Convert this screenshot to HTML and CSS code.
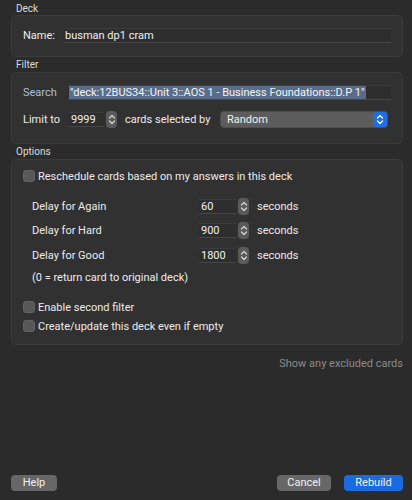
FILE: index.html
```html
<!DOCTYPE html>
<html>
<head>
<meta charset="utf-8">
<link rel="stylesheet" href="styles.css">
</head>
<body>
<div class="dialog">
  <div class="group-title t-deck">Deck</div>
  <div class="box box-deck">
    <div class="row">
      <span class="lbl lbl-name">Name:</span>
      <div class="field field-name">busman dp1 cram</div>
    </div>
  </div>

  <div class="group-title t-filter">Filter</div>
  <div class="box box-filter">
    <div class="row row-search">
      <span class="lbl lbl-search">Search</span>
      <div class="field field-search"><span class="sel">"deck:12BUS34::Unit 3::AOS 1 - Business Foundations::D.P 1"</span></div>
    </div>
    <div class="row row-limit">
      <span class="lbl lbl-limit">Limit to</span>
      <div class="field field-num field-limit">9999</div>
      <span class="stepper"><svg width="8" height="13" viewBox="0 0 8 13"><path d="M1.5 5 L4 2.5 L6.5 5 M1.5 8 L4 10.5 L6.5 8" fill="none" stroke="#d8d8d8" stroke-width="1.2" stroke-linecap="round" stroke-linejoin="round"/></svg></span>
      <span class="lbl lbl-cards">cards selected by</span>
      <div class="select">
        <span class="select-text">Random</span>
        <span class="select-btn"><svg width="8" height="13" viewBox="0 0 8 13"><path d="M1.5 5 L4 2.5 L6.5 5 M1.5 8 L4 10.5 L6.5 8" fill="none" stroke="#ffffff" stroke-width="1.3" stroke-linecap="round" stroke-linejoin="round"/></svg></span>
      </div>
    </div>
  </div>

  <div class="group-title t-options">Options</div>
  <div class="box box-options">
    <div class="row row-check first-check">
      <span class="checkbox"></span>
      <span class="check-text">Reschedule cards based on my answers in this deck</span>
    </div>
    <div class="delays">
      <div class="row delay-row d-again">
        <span class="delay-lbl">Delay for Again</span>
        <div class="field field-num field-delay">60</div>
        <span class="stepper"><svg width="8" height="13" viewBox="0 0 8 13"><path d="M1.5 5 L4 2.5 L6.5 5 M1.5 8 L4 10.5 L6.5 8" fill="none" stroke="#d8d8d8" stroke-width="1.2" stroke-linecap="round" stroke-linejoin="round"/></svg></span>
        <span class="unit">seconds</span>
      </div>
      <div class="row delay-row d-hard">
        <span class="delay-lbl">Delay for Hard</span>
        <div class="field field-num field-delay">900</div>
        <span class="stepper"><svg width="8" height="13" viewBox="0 0 8 13"><path d="M1.5 5 L4 2.5 L6.5 5 M1.5 8 L4 10.5 L6.5 8" fill="none" stroke="#d8d8d8" stroke-width="1.2" stroke-linecap="round" stroke-linejoin="round"/></svg></span>
        <span class="unit">seconds</span>
      </div>
      <div class="row delay-row d-good">
        <span class="delay-lbl">Delay for Good</span>
        <div class="field field-num field-delay">1800</div>
        <span class="stepper"><svg width="8" height="13" viewBox="0 0 8 13"><path d="M1.5 5 L4 2.5 L6.5 5 M1.5 8 L4 10.5 L6.5 8" fill="none" stroke="#d8d8d8" stroke-width="1.2" stroke-linecap="round" stroke-linejoin="round"/></svg></span>
        <span class="unit">seconds</span>
      </div>
      <div class="note">(0 = return card to original deck)</div>
    </div>
    <div class="row row-check check-enable">
      <span class="checkbox"></span>
      <span class="check-text">Enable second filter</span>
    </div>
    <div class="row row-check check-create">
      <span class="checkbox"></span>
      <span class="check-text">Create/update this deck even if empty</span>
    </div>
  </div>

  <div class="excluded">Show any excluded cards</div>

  <div class="buttons">
    <span class="btn btn-help">Help</span>
    <span class="spacer"></span>
    <span class="btn btn-cancel">Cancel</span>
    <span class="btn btn-rebuild">Rebuild</span>
  </div>
</div>
</body>
</html>
```

FILE: styles.css
```css
* { box-sizing: border-box; }
html, body {
  margin: 0;
  padding: 0;
  background: #2b2b2b;
}
body {
  width: 412px;
  height: 500px;
  overflow: hidden;
  font-family: Roboto, "Noto Sans", sans-serif;
  font-size: 11px;
  color: #ececec;
}
.dialog {
  display: flex;
  flex-direction: column;
  padding: 0 9px 0 11px;
  height: 500px;
}
.group-title {
  font-size: 10px;
  color: #dcdcdc;
  padding-left: 5px;
  height: 14px;
  line-height: 14px;
}
.t-deck { margin-top: 2px; height: 13px; }
.t-filter { margin-top: 1px; }
.t-options { margin-top: 1px; }

.box {
  background: #313131;
  border: 1px solid #3b3b3b;
  border-radius: 5px;
  display: flex;
  flex-direction: column;
}
.box-deck { height: 42px; padding: 12px 11px 0 11px; }
.box-filter { height: 72px; padding: 12px 11px 0 11px; }
.box-options { height: 186px; padding: 10px 11px 0 11px; }

.row {
  display: flex;
  align-items: center;
}
.lbl { color: #ececec; white-space: nowrap; }
.field {
  height: 15px;
  background: #2e2e2e;
  border-top: 1px solid #3c3c3c;
  border-bottom: 1px solid #474747;
  line-height: 13px;
  padding-left: 2px;
  white-space: nowrap;
  overflow: hidden;
  color: #f0f0f0;
}
.box-deck .row { height: 15px; }
.lbl-name { width: 40px; }
.field-name { flex: 1; }

.row-search { height: 15px; }
.lbl-search { width: 45px; color: #a9c1de; }
.field-search { flex: 1; padding-left: 1px; }
.sel {
  background: #596d8b;
  color: #f4f4f4;
  padding: 0 1px;
  display: inline-block;
  height: 13px;
  line-height: 13px;
}

.row-limit { height: 17px; margin-top: 11px; }
.lbl-limit { width: 46px; }
.field-limit { width: 35px; }
.stepper {
  width: 11px;
  height: 17px;
  border-radius: 4px;
  background: #5a5a5a;
  display: flex;
  align-items: center;
  justify-content: center;
  margin-left: 2px;
}
.lbl-cards { margin-left: 8px; }
.select {
  margin-left: auto;
  width: 168px;
  height: 17px;
  border-radius: 4px;
  background: #5c5c5c;
  border: 1px solid #4e4e4e;
  display: flex;
  align-items: center;
  justify-content: space-between;
  padding: 0 0 0 6px;
  margin-right: 3px;
}
.select-text { color: #f0f0f0; }
.select-btn {
  width: 14px;
  height: 15px;
  background: #1f6ee2;
  border-radius: 3px;
  display: flex;
  align-items: center;
  justify-content: center;
}

.row-check { height: 12px; }
.checkbox {
  width: 12px;
  height: 12px;
  border-radius: 3px;
  background: #585858;
  border: 1px solid #626262;
  margin-right: 3px;
}
.check-text { white-space: nowrap; }

.delays { padding-left: 9px; }
.delay-row { height: 16px; }
.d-again { margin-top: 16px; }
.d-hard { margin-top: 8px; }
.d-good { margin-top: 9px; }
.delay-lbl { width: 167px; white-space: nowrap; }
.field-delay { width: 37px; }
.unit { margin-left: 8px; }
.note { margin-top: 7px; height: 15px; line-height: 15px; }

.check-enable { margin-top: 16px; }
.check-create { margin-top: 7px; }

.excluded {
  text-align: right;
  color: #8c8c8c;
  margin-top: 11px;
  height: 15px;
  line-height: 15px;
}

.buttons {
  display: flex;
  align-items: center;
  margin-top: auto;
  margin-bottom: 9px;
}
.spacer { flex: 1; }
.btn {
  height: 16px;
  line-height: 16px;
  border-radius: 4px;
  text-align: center;
  color: #f2f2f2;
  background: #676767;
}
.btn-help { width: 46px; }
.btn-cancel { width: 54px; margin-right: 13px; }
.btn-rebuild { width: 59px; background: #1a6be0; }
```
